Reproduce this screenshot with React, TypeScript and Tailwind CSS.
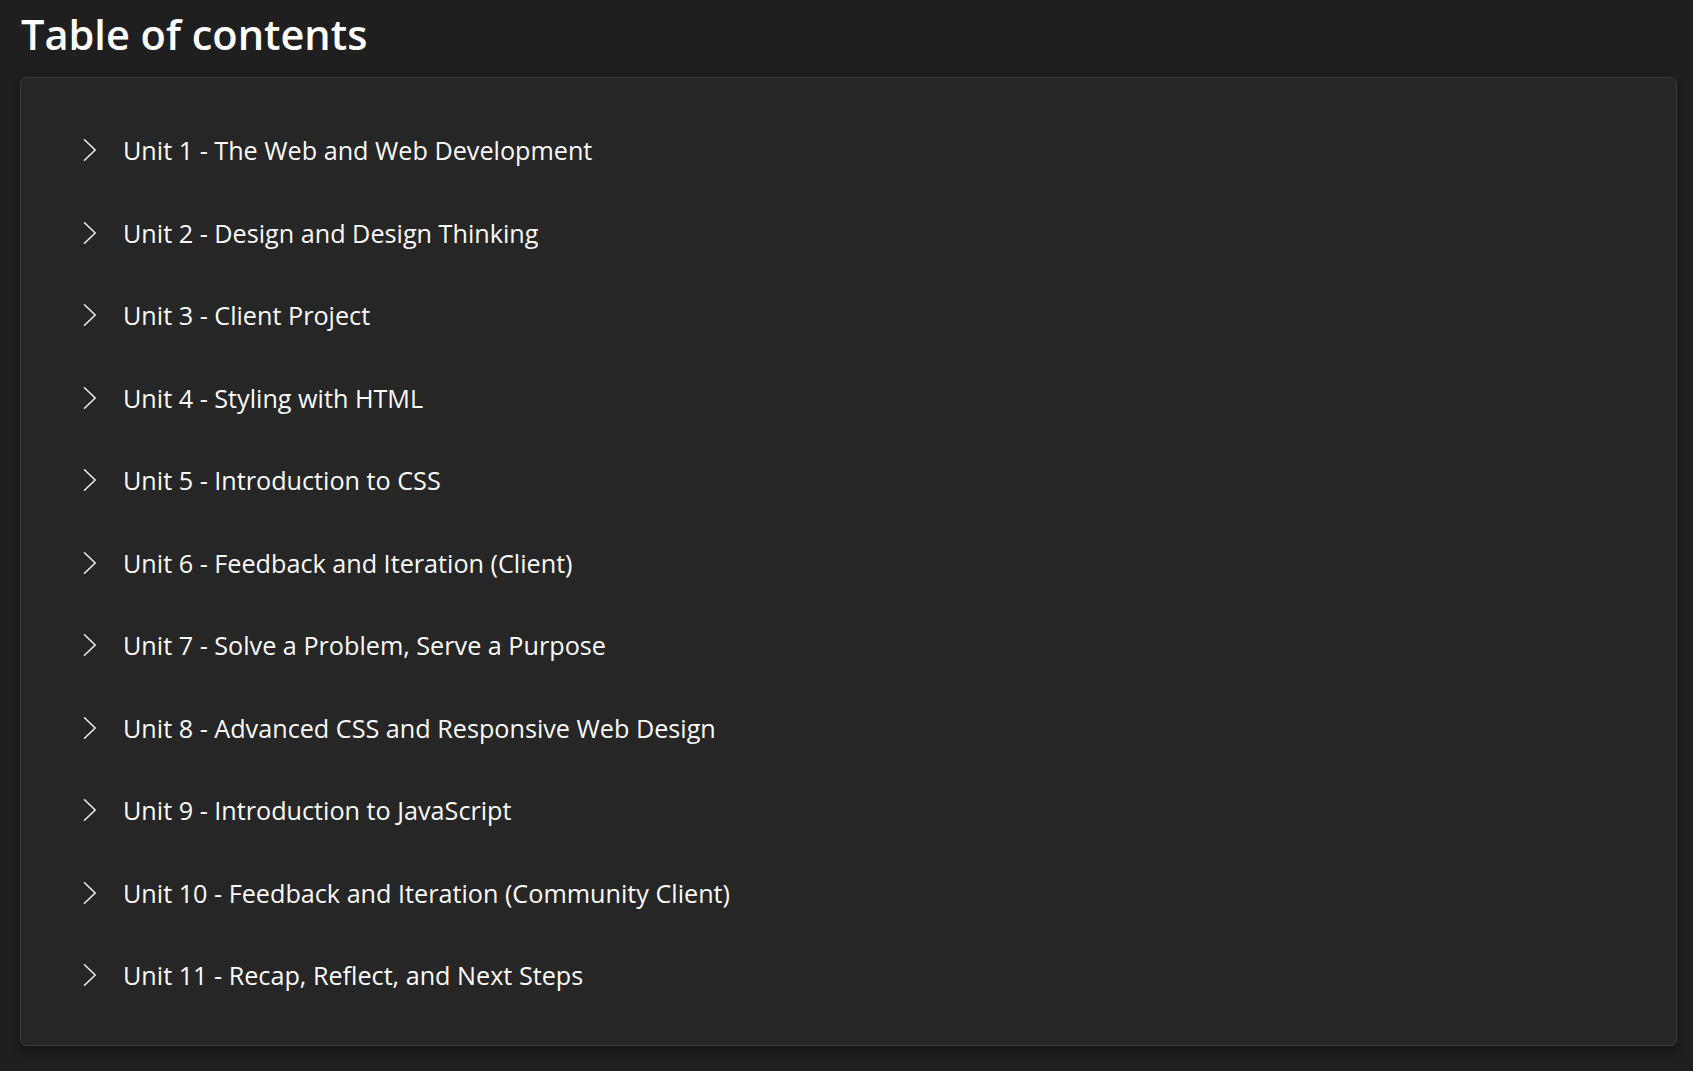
const units = [
  'Unit 1 - The Web and Web Development',
  'Unit 2 - Design and Design Thinking',
  'Unit 3 - Client Project',
  'Unit 4 - Styling with HTML',
  'Unit 5 - Introduction to CSS',
  'Unit 6 - Feedback and Iteration (Client)',
  'Unit 7 - Solve a Problem, Serve a Purpose',
  'Unit 8 - Advanced CSS and Responsive Web Design',
  'Unit 9 - Introduction to JavaScript',
  'Unit 10 - Feedback and Iteration (Community Client)',
  'Unit 11 - Recap, Reflect, and Next Steps',
];

function Chevron() {
  return (
    <svg width="14" height="22" viewBox="0 0 14 22" fill="none" className="shrink-0">
      <polyline points="1.5,0.8 12.2,11 1.5,21.2" stroke="#f2f2f2" strokeWidth="1.5" strokeLinecap="round" strokeLinejoin="round" />
    </svg>
  );
}

export default function App() {
  return (
    <div
      className="min-h-screen bg-[#1f1f1f] text-white pl-[20px] pr-[16px] pt-[6px] pb-[24px]"
      style={{ fontFamily: '"Segoe UI", "Open Sans", sans-serif' }}
    >
      {/* Header */}
      <h1 className="text-[41.5px] leading-[56px] font-semibold pl-[1px] mb-[15px]">Table of contents</h1>

      {/* Units list */}
      <div className="rounded-[6px] border border-[#3a3a3a] bg-[#262626] shadow-[0_4px_8px_rgba(0,0,0,0.35)] pt-[31px] pb-[28px]">
        {units.map((unit) => (
          <div key={unit} className="flex items-center h-[82.5px] pl-[62px]">
            <Chevron />
            <span className="ml-[26px] text-[25.2px] leading-[34px] text-[#fafafa]">{unit}</span>
          </div>
        ))}
      </div>
    </div>
  );
}
